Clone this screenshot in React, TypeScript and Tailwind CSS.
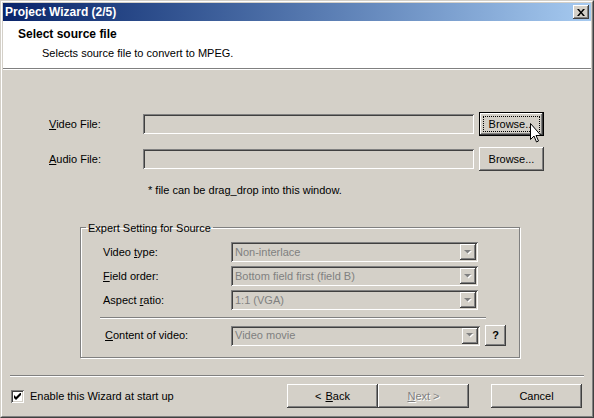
import React from "react"

const font = { fontFamily: '"Liberation Sans", Arial, sans-serif' }

const raised =
  "shadow-[inset_-1px_-1px_0_#404040,inset_1px_1px_0_#ffffff,inset_-2px_-2px_0_#808080]"
const sunken =
  "shadow-[inset_1px_1px_0_#808080,inset_-1px_-1px_0_#ffffff,inset_2px_2px_0_#404040,inset_-2px_-2px_0_#d4d0c8]"

function Btn({
  children,
  className = "",
  focused = false,
}: {
  children: React.ReactNode
  className?: string
  focused?: boolean
}) {
  if (focused) {
    return (
      <div className={`shrink-0 border border-black bg-[#D4D0C8] ${className}`}>
        <div className={`flex h-full w-full items-center justify-center p-[3px] ${raised}`}>
          <div className="flex h-full w-full items-center justify-center border border-dotted border-black text-[11px] text-black">
            {children}
          </div>
        </div>
      </div>
    )
  }
  return (
    <div
      className={`flex shrink-0 items-center justify-center whitespace-nowrap bg-[#D4D0C8] text-[11px] text-black ${raised} ${className}`}
    >
      {children}
    </div>
  )
}

function TextBox({ className = "" }: { className?: string }) {
  return <div className={`h-[20px] shrink-0 bg-[#D4D0C8] ${sunken} ${className}`} />
}

function Combo({ value, className = "" }: { value: string; className?: string }) {
  return (
    <div className={`flex h-[20px] shrink-0 items-center bg-[#D4D0C8] p-[2px] ${sunken} ${className}`}>
      <span className="flex-1 whitespace-nowrap pl-[2px] text-[11px] text-[#808080]">{value}</span>
      <div className={`flex h-[16px] w-[16px] items-center justify-center bg-[#D4D0C8] ${raised}`}>
        <svg width="8" height="5" viewBox="0 0 8 5">
          <path d="M1 1h7l-3.5 3.5z" fill="#ffffff" />
          <path d="M0 0h7l-3.5 3.5z" fill="#808080" />
        </svg>
      </div>
    </div>
  )
}

function Label({ children, className = "" }: { children: React.ReactNode; className?: string }) {
  return <span className={`shrink-0 whitespace-nowrap text-[11px] text-black ${className}`}>{children}</span>
}

export default function App() {
  return (
    <div style={font} className="relative h-[418px] w-[594px] select-none overflow-hidden bg-[#D4D0C8]">
      {/* window frame */}
      <div className="h-full w-full border border-t-[#D4D0C8] border-l-[#D4D0C8] border-r-[#404040] border-b-[#404040]">
        <div className="flex h-full w-full flex-col border border-t-white border-l-white border-r-[#808080] border-b-[#808080] p-px">
          {/* title bar */}
          <div className="flex h-[18px] items-center bg-gradient-to-r from-[#0A246A] to-[#A6CAF0] pl-[2px] pr-[2px]">
            <span className="flex-1 text-[12px] font-bold text-white">Project Wizard (2/5)</span>
            <div className={`flex h-[14px] w-[16px] items-center justify-center bg-[#D4D0C8] ${raised}`}>
              <svg width="8" height="7" viewBox="0 0 8 7">
                <path d="M0 0h2l2 2.5L6 0h2L5 3.5 8 7H6L4 4.5 2 7H0l3-3.5z" fill="#000" />
              </svg>
            </div>
          </div>

          {/* header */}
          <div className="flex h-[47px] flex-col bg-white pl-[15px] pt-[6px]">
            <span className="text-[12px] font-bold leading-[14px] text-black">Select source file</span>
            <span className="mt-[5px] pl-[24px] text-[11px] leading-[14px] text-black">
              Selects source file to convert to MPEG.
            </span>
          </div>
          <div className="h-px bg-[#808080]" />
          <div className="h-px bg-white" />

          {/* body */}
          <div className="flex flex-1 flex-col pt-[42px]">
            <div className="flex items-center">
              <Label className="w-[140px] pl-[46px]">
                <u>V</u>ideo File:
              </Label>
              <TextBox className="w-[331px]" />
              <Btn focused className="ml-[5px] h-[24px] w-[65px]">
                Browse...
              </Btn>
            </div>
            <div className="mt-[11px] flex items-center">
              <Label className="w-[140px] pl-[46px]">
                <u>A</u>udio File:
              </Label>
              <TextBox className="w-[331px]" />
              <Btn className="ml-[5px] h-[24px] w-[65px]">Browse...</Btn>
            </div>
            <Label className="mt-[11px] pl-[145px]">* file can be drag_drop into this window.</Label>

            {/* group box */}
            <fieldset className="ml-[77px] mt-[21px] w-[440px] border border-[#808080] pb-[11px] pl-[5px] pr-[12px] shadow-[1px_1px_0_#ffffff,inset_1px_1px_0_#ffffff]">
              <legend className="px-[2px] text-[11px] text-black">Expert Setting for Source</legend>
              <div className="pl-[17px]">
                <div className="mt-[6px] flex flex-col gap-[4px]">
                  <div className="flex items-center">
                    <Label className="w-[128px]">
                      Video <u>t</u>ype:
                    </Label>
                    <Combo value="Non-interlace" className="w-[247px]" />
                  </div>
                  <div className="flex items-center">
                    <Label className="w-[128px]">
                      <u>F</u>ield order:
                    </Label>
                    <Combo value="Bottom field first (field B)" className="w-[247px]" />
                  </div>
                  <div className="flex items-center">
                    <Label className="w-[128px]">
                      Aspect <u>r</u>atio:
                    </Label>
                    <Combo value="1:1 (VGA)" className="w-[247px]" />
                  </div>
                </div>
                <div className="mt-[7px] -ml-[3px] h-px w-[386px] bg-[#808080] shadow-[0_1px_0_#ffffff]" />
                <div className="mt-[7px] flex items-center">
                  <Label className="w-[128px] pl-[2px]">
                    <u>C</u>ontent of video:
                  </Label>
                  <Combo value="Video movie" className="w-[249px]" />
                  <Btn className="ml-[5px] h-[21px] w-[21px] font-bold">?</Btn>
                </div>
              </div>
            </fieldset>

            {/* bottom separator */}
            <div className="mx-[7px] mt-[17px] h-px bg-[#808080]" />
            <div className="mx-[7px] h-px bg-white" />

            <div className="mt-[7px] flex items-center">
              <div className="ml-[8px] flex h-[13px] w-[13px] shrink-0 items-center justify-center bg-white shadow-[inset_1px_1px_0_#808080,inset_-1px_-1px_0_#ffffff,inset_2px_2px_0_#404040,inset_-2px_-2px_0_#d4d0c8]">
                <svg width="7" height="7" viewBox="0 0 7 7">
                  <path d="M0 2v3l2 2 5-5V-1L2 4z" fill="#000" />
                </svg>
              </div>
              <Label className="ml-[6px] flex-1">Enable this Wizard at start up</Label>
              <Btn className="h-[24px] w-[91px]">
                &lt; <u className="ml-[4px]">B</u>ack
              </Btn>
              <Btn className="h-[24px] w-[91px]">
                <span className="text-[#808080] [text-shadow:1px_1px_0_#ffffff]">
                  <u>N</u>ext &gt;
                </span>
              </Btn>
              <Btn className="ml-[22px] mr-[9px] h-[24px] w-[91px]">Cancel</Btn>
            </div>
          </div>
        </div>
      </div>

      {/* mouse pointer */}
      <svg className="absolute left-[530px] top-[123px]" width="12" height="20" viewBox="0 0 12 20">
        <path
          d="M0.5 0.5v16l3.5-3.5 2.5 6 2-1-2.5-5.5h5z"
          fill="#ffffff"
          stroke="#000000"
          strokeWidth="1"
          strokeLinejoin="miter"
        />
      </svg>
    </div>
  )
}
